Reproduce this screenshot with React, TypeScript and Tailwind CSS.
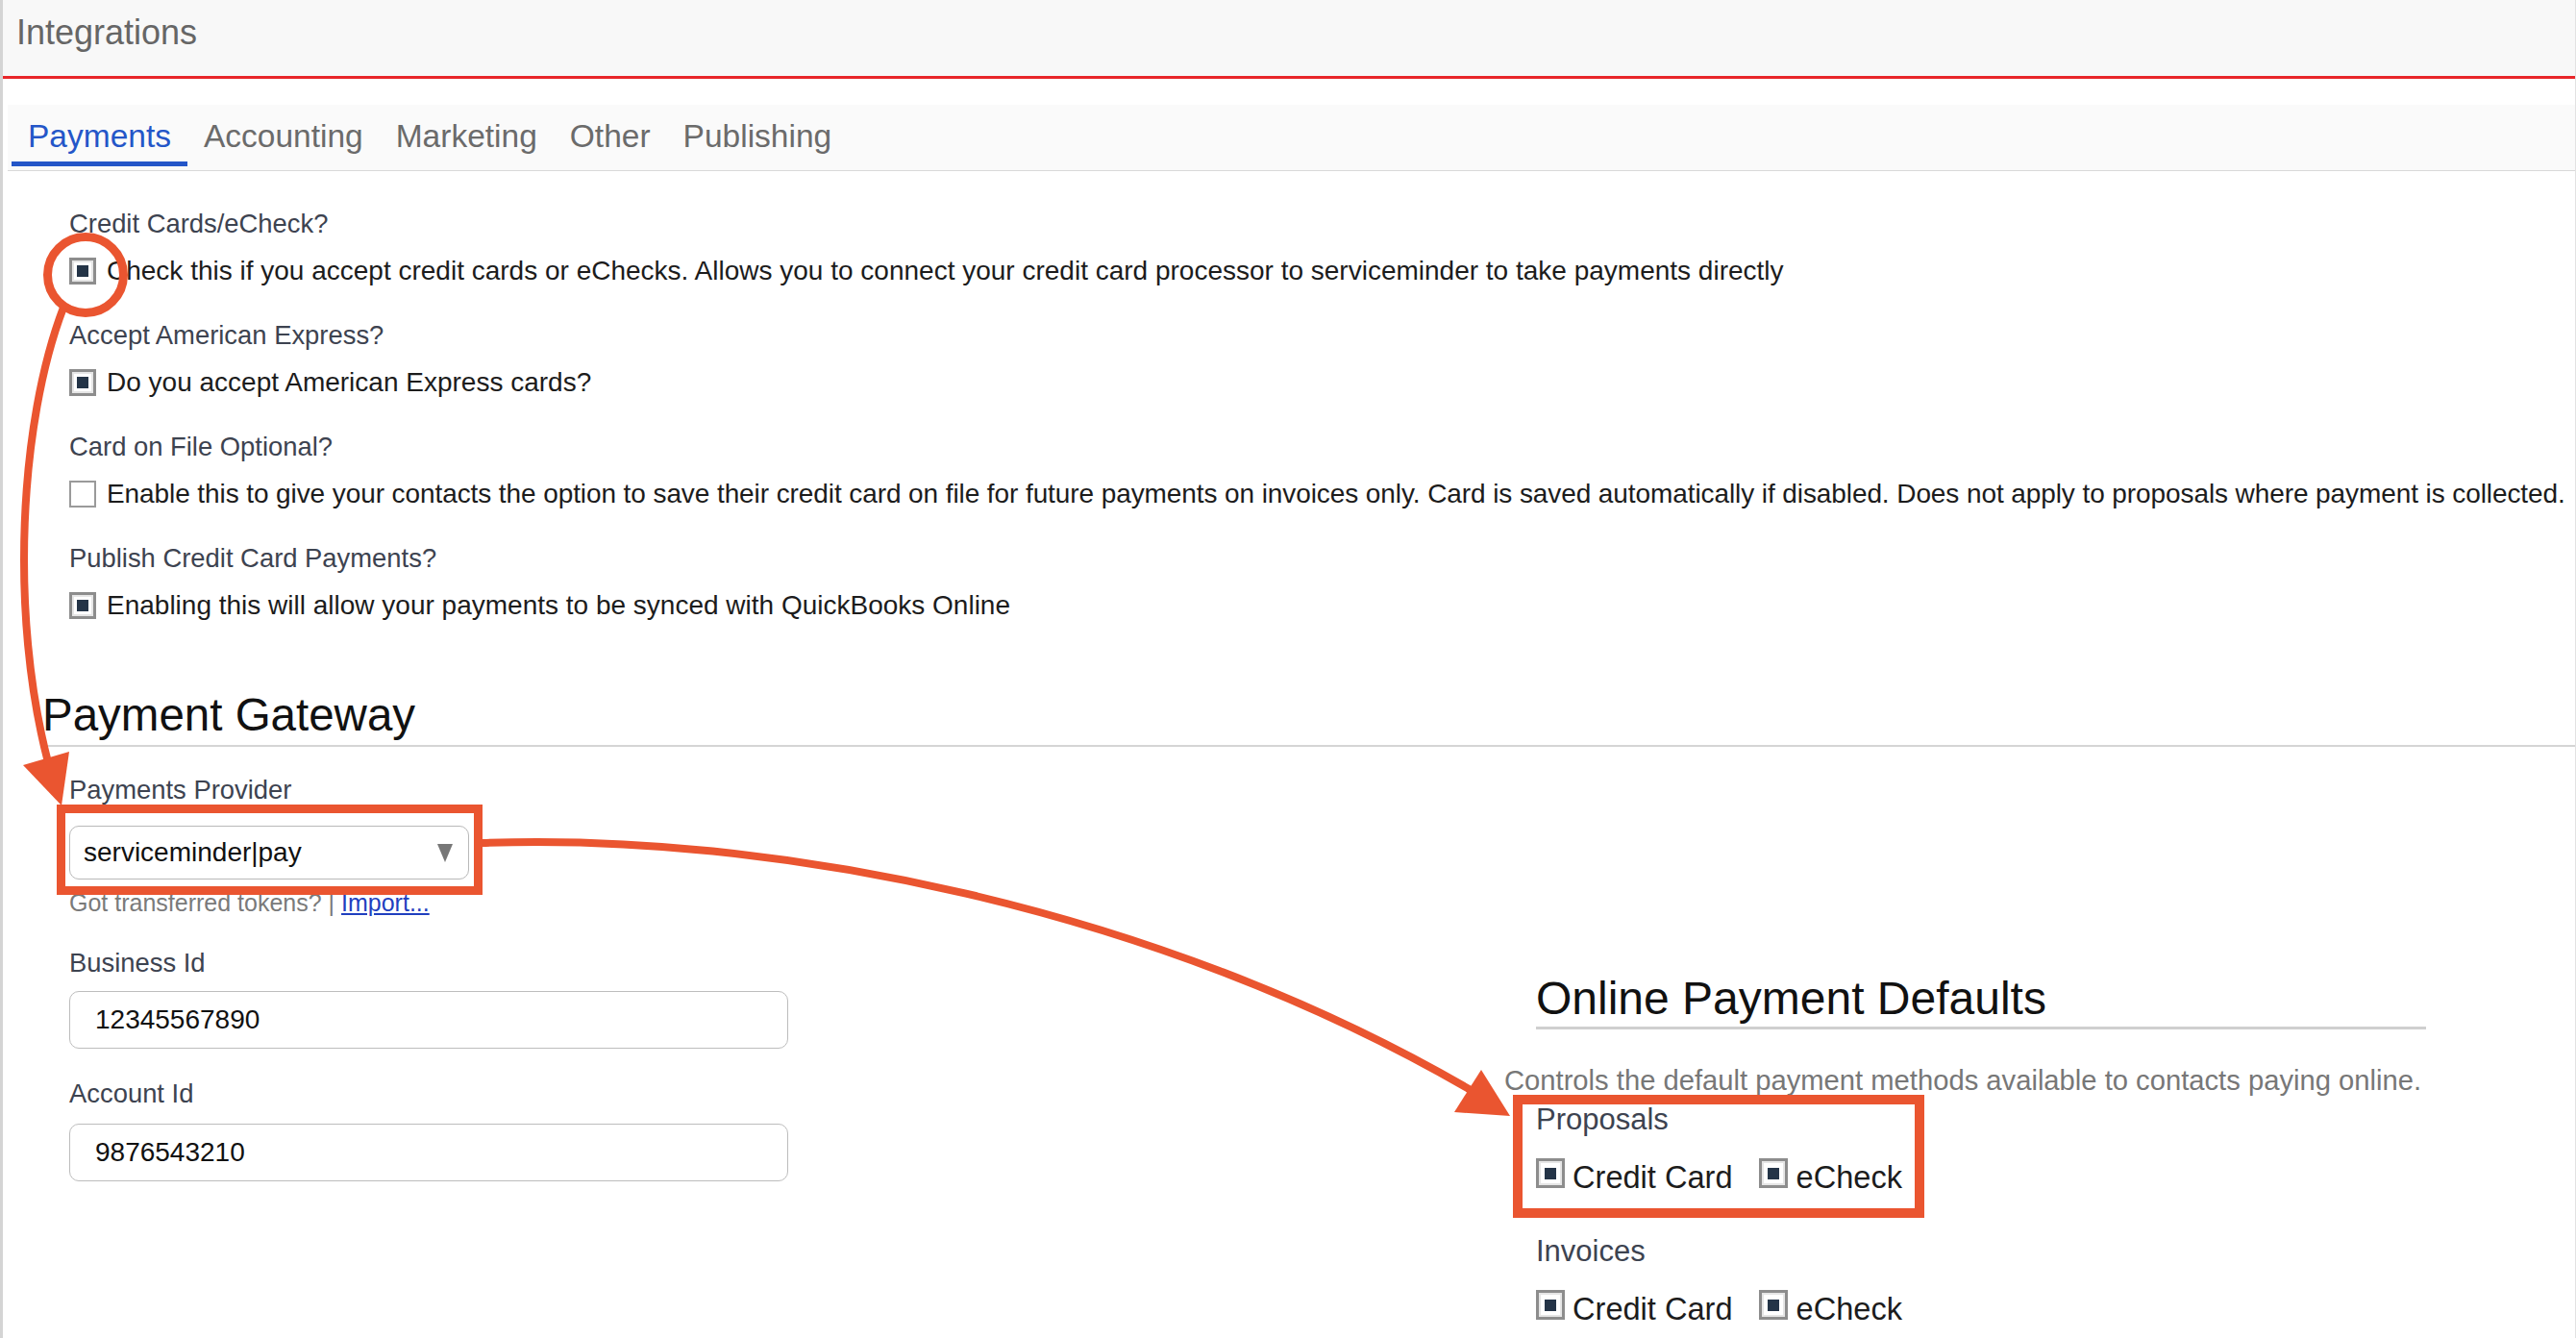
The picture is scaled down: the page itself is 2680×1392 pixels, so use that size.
import React from 'react';

interface CheckProps {
  checked?: boolean;
  large?: boolean;
}

const Check: React.FC<CheckProps> = ({ checked = true, large = false }) => {
  if (!checked) {
    return <span className="block shrink-0 w-[28px] h-[28px] border-[2px] border-[#9a9a9a] bg-white" />;
  }
  return (
    <span
      className={`flex shrink-0 items-center justify-center border-[3px] border-[#8d8d8d] bg-white shadow-[inset_0_0_0_2px_#e6e6e6] ${
        large ? 'w-[30px] h-[31px]' : 'w-[28px] h-[28px]'
      }`}
    >
      <span className="block w-[12px] h-[12px] bg-[#243447]" />
    </span>
  );
};

interface OptionProps {
  label: string;
  text: string;
  checked?: boolean;
  circled?: boolean;
  last?: boolean;
  tight?: boolean;
}

const Option: React.FC<OptionProps> = ({ label, text, checked = true, circled = false, last = false, tight = false }) => {
  return (
    <div className={last ? '' : 'mb-[29px]'}>
      <div className="text-[27.4px] leading-[36px] text-[#3d4350]">{label}</div>
      <div className="mt-[11px] flex h-[40px] items-center gap-[11px]">
        <div className="relative">
          <Check checked={checked} />
          {circled && (
            <span className="absolute left-[-27px] top-[-26px] z-10 block w-[88px] h-[88px] rounded-full border-[9px] border-[#ea5530]" />
          )}
        </div>
        <span
          className={`whitespace-nowrap text-[28px] leading-[36px] text-[#1c1c1c] ${tight ? 'tracking-[-0.09px]' : ''}`}
        >
          {text}
        </span>
      </div>
    </div>
  );
};

const tabs = ['Payments', 'Accounting', 'Marketing', 'Other', 'Publishing'];

interface MethodRowProps {
  className?: string;
}

const MethodRow: React.FC<MethodRowProps> = ({ className = '' }) => (
  <div className={`flex h-[40px] items-start ${className}`}>
    <Check large />
    <span className="ml-[8px] text-[32.6px] leading-[40px] text-[#1c1c1c]">Credit Card</span>
    <span className="ml-[27px]">
      <Check large />
    </span>
    <span className="ml-[9px] text-[32.6px] leading-[40px] text-[#1c1c1c]">eCheck</span>
  </div>
);

const App: React.FC = () => {
  return (
    <div className="relative h-screen w-full overflow-hidden border-l-[3px] border-r border-l-[#d4d4d4] border-r-[#e2e2e2] bg-white font-['Liberation_Sans',Arial,sans-serif]">
      {/* header */}
      <div className="h-[82px] border-b-[3px] border-[#e8262a] bg-[#f8f8f8] pl-[14px] pt-[14px]">
        <div className="text-[36px] leading-[40px] text-[#666]">Integrations</div>
      </div>

      {/* tabs */}
      <div className="ml-[5px] mt-[27px] h-[69px] border-b border-[#d9d9d9] bg-[#fafafa] pl-[4px]">
        <div className="flex">
          {tabs.map((t, i) => (
            <div
              key={t}
              className={`h-[64px] border-b-[5px] px-[17px] pt-[14px] text-[33.5px] leading-[38px] ${
                i === 0 ? 'border-[#2456c8] text-[#2456c8]' : 'border-transparent text-[#6b6b6b]'
              }`}
            >
              {t}
            </div>
          ))}
        </div>
      </div>

      {/* options */}
      <div className="pl-[69px] pt-[37px]">
        <Option
          label="Credit Cards/eCheck?"
          text="Check this if you accept credit cards or eChecks. Allows you to connect your credit card processor to serviceminder to take payments directly"
          circled
        />
        <Option label="Accept American Express?" text="Do you accept American Express cards?" />
        <Option
          label="Card on File Optional?"
          checked={false}
          tight
          text="Enable this to give your contacts the option to save their credit card on file for future payments on invoices only. Card is saved automatically if disabled. Does not apply to proposals where payment is collected."
        />
        <Option
          label="Publish Credit Card Payments?"
          text="Enabling this will allow your payments to be synced with QuickBooks Online"
          last
        />
      </div>

      {/* payment gateway */}
      <div className="ml-[41px] mt-[66px] border-b-2 border-[#d5d5d5] pb-[3px] text-[47.5px] leading-[56px] text-[#111]">
        Payment Gateway
      </div>

      <div className="flex pl-[69px]">
        <div className="w-[748px] shrink-0">
          <div className="mt-[27px] text-[27.4px] leading-[36px] text-[#3d4350]">Payments Provider</div>
          <div className="relative mt-[19px] w-[416px]">
            <div className="flex h-[56px] items-center justify-between rounded-[10px] border-[1.5px] border-[#b9b9b9] bg-white pl-[14px] pr-[16px]">
              <span className="text-[28px] leading-[36px] text-[#111]">serviceminder|pay</span>
              <svg width="16" height="20" viewBox="0 0 16 20">
                <polygon points="0,1 16,1 8,20" fill="#777" />
              </svg>
            </div>
            <span className="absolute left-[-13px] top-[-22px] block w-[443px] h-[94px] border-[9px] border-[#ea5530]" />
          </div>
          <div className="mt-[10px] text-[25px] leading-[28px] text-[#7a7a7a]">
            Got transferred tokens? | <span className="text-[#1f3fbf] underline">Import...</span>
          </div>

          <div className="mt-[31px] text-[27.4px] leading-[36px] text-[#3d4350]">Business Id</div>
          <div className="mt-[11px] flex h-[60px] items-center rounded-[10px] border-[1.5px] border-[#bdbdbd] pl-[26px] text-[28px] text-[#111]">
            12345567890
          </div>

          <div className="mt-[29px] text-[27.4px] leading-[36px] text-[#3d4350]">Account Id</div>
          <div className="mt-[13px] flex h-[60px] items-center rounded-[10px] border-[1.5px] border-[#bdbdbd] pl-[26px] text-[28px] text-[#111]">
            9876543210
          </div>
        </div>

        {/* online payment defaults */}
        <div className="ml-[745px] mt-[234px] w-[980px] shrink-0">
          <div className="ml-[33px] w-[926px] border-b-[3px] border-[#cfcfcf] pb-[1px] text-[48px] leading-[56px] text-[#111]">
            Online Payment Defaults
          </div>
          <div className="mt-[35px] whitespace-nowrap text-[29.2px] leading-[36px] text-[#777]">
            Controls the default payment methods available to contacts paying online.
          </div>
          <div className="relative ml-[33px] mt-[5px]">
            <div className="text-[31px] leading-[36px] text-[#3d4350]">Proposals</div>
            <MethodRow className="mt-[22px]" />
            <span className="absolute left-[-24px] top-[-8px] block w-[428px] h-[128px] border-[10px] border-[#ea5530]" />
          </div>
          <div className="ml-[33px] mt-[39px] text-[31px] leading-[36px] text-[#3d4350]">Invoices</div>
          <MethodRow className="ml-[33px] mt-[22px]" />
        </div>
      </div>

      {/* annotation arrows */}
      <svg
        className="pointer-events-none absolute left-[-3px] top-0 z-20"
        width="2680"
        height="1392"
        viewBox="0 0 2680 1392"
      >
        <path d="M66 320 C20 440 10 640 50 793" fill="none" stroke="#ea5530" strokeWidth="8" />
        <polygon points="64,838 24,796 72,782" fill="#ea5530" />
        <path d="M501 877 C800 866 1200 942 1530 1134" fill="none" stroke="#ea5530" strokeWidth="8" />
        <polygon points="1571,1161 1541,1113 1513,1157" fill="#ea5530" />
      </svg>
    </div>
  );
};

export default App;
